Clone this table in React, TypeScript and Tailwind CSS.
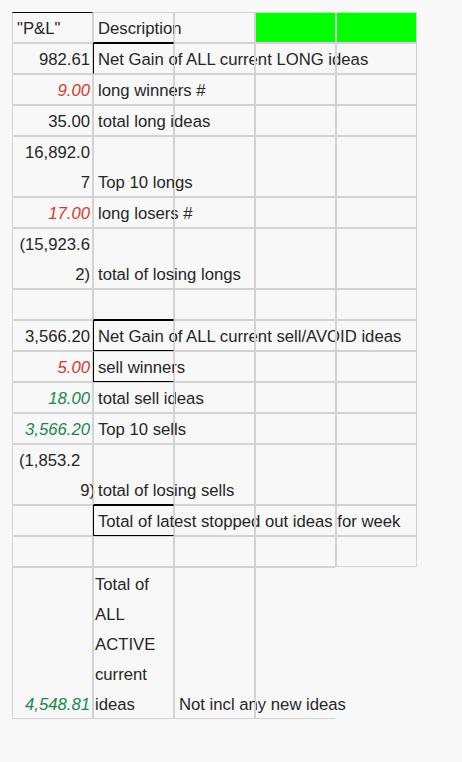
import React from "react";

const G = "border-[#d3d3d3]";

function Cell({
  children,
  className = "",
}: {
  children?: React.ReactNode;
  className?: string;
}) {
  return (
    <div
      className={`flex min-w-0 items-end overflow-visible whitespace-nowrap border ${G} leading-[30px] [&>*]:-mb-[2px] ${className}`}
    >
      {children}
    </div>
  );
}

function Num({ children, tone }: { children: React.ReactNode; tone?: "red" | "green" }) {
  const c =
    tone === "red"
      ? "italic text-[#d53a2f]"
      : tone === "green"
      ? "italic text-[#168a4c]"
      : "";
  return <span className={`block w-full pr-[2px] text-right ${c}`}>{children}</span>;
}

function Txt({ children, className = "" }: { children: React.ReactNode; className?: string }) {
  return <span className={`block pl-[4px] ${className}`}>{children}</span>;
}

export default function App() {
  return (
    <div
      className="h-[762px] w-[462px] bg-[#f8f8f8] pl-[12px] pt-[12px] text-[16.7px] text-[#262626]"
      style={{ fontFamily: '"Liberation Sans", Arial, sans-serif' }}
    >
      <div className="grid grid-cols-[81px_81px_81px_81px_81px] grid-rows-[31px_31px_31px_31px_61px_31px_61px_31px_31px_31px_31px_31px_61px_31px_31px_152px]">
        {/* row 1 */}
        <Cell className="border-t-black">
          <Txt>"P&amp;L"</Txt>
        </Cell>
        <Cell className="border-b-black">
          <Txt>Description</Txt>
        </Cell>
        <Cell />
        <Cell className="border-[#b2dcb2] bg-[#00ff00]" />
        <Cell className="border-[#b2dcb2] bg-[#00ff00]" />

        {/* row 2 */}
        <Cell>
          <Num>982.61</Num>
        </Cell>
        <Cell className="border-l-black border-t-black">
          <Txt>Net Gain of ALL current LONG ideas</Txt>
        </Cell>
        <Cell />
        <Cell />
        <Cell />

        {/* row 3 */}
        <Cell>
          <Num tone="red">9.00</Num>
        </Cell>
        <Cell>
          <Txt>long winners #</Txt>
        </Cell>
        <Cell />
        <Cell />
        <Cell />

        {/* row 4 */}
        <Cell>
          <Num>35.00</Num>
        </Cell>
        <Cell>
          <Txt>total long ideas</Txt>
        </Cell>
        <Cell />
        <Cell />
        <Cell />

        {/* row 5 */}
        <Cell>
          <div className="w-full">
            <Num>16,892.0</Num>
            <Num>7</Num>
          </div>
        </Cell>
        <Cell>
          <Txt>Top 10 longs</Txt>
        </Cell>
        <Cell />
        <Cell />
        <Cell />

        {/* row 6 */}
        <Cell>
          <Num tone="red">17.00</Num>
        </Cell>
        <Cell>
          <Txt>long losers #</Txt>
        </Cell>
        <Cell />
        <Cell />
        <Cell />

        {/* row 7 */}
        <Cell>
          <div className="w-full">
            <Num>(15,923.6</Num>
            <Num>2)</Num>
          </div>
        </Cell>
        <Cell>
          <Txt>total of losing longs</Txt>
        </Cell>
        <Cell />
        <Cell />
        <Cell />

        {/* row 8 */}
        <Cell />
        <Cell className="border-b-black" />
        <Cell />
        <Cell />
        <Cell />

        {/* row 9 */}
        <Cell>
          <Num>3,566.20</Num>
        </Cell>
        <Cell className="border-l-black border-t-black border-b-black">
          <Txt>Net Gain of ALL current sell/AVOID ideas</Txt>
        </Cell>
        <Cell />
        <Cell />
        <Cell />

        {/* row 10 */}
        <Cell>
          <Num tone="red">5.00</Num>
        </Cell>
        <Cell className="border-l-black border-b-black">
          <Txt>sell winners</Txt>
        </Cell>
        <Cell />
        <Cell />
        <Cell />

        {/* row 11 */}
        <Cell>
          <Num tone="green">18.00</Num>
        </Cell>
        <Cell>
          <Txt>total sell ideas</Txt>
        </Cell>
        <Cell />
        <Cell />
        <Cell />

        {/* row 12 */}
        <Cell>
          <Num tone="green">3,566.20</Num>
        </Cell>
        <Cell>
          <Txt>Top 10 sells</Txt>
        </Cell>
        <Cell />
        <Cell />
        <Cell />

        {/* row 13 */}
        <Cell>
          <div className="w-full">
            <span className="block pl-[6px]">(1,853.2</span>
            <span className="-mr-[3px] block text-right">9)</span>
          </div>
        </Cell>
        <Cell className="border-b-black">
          <Txt>total of losing sells</Txt>
        </Cell>
        <Cell />
        <Cell />
        <Cell />

        {/* row 14 */}
        <Cell />
        <Cell className="border-l-black border-t-black border-b-black">
          <Txt>Total of latest stopped out ideas for week</Txt>
        </Cell>
        <Cell />
        <Cell />
        <Cell />

        {/* row 15 */}
        <Cell />
        <Cell />
        <Cell />
        <Cell />
        <Cell />

        {/* row 16 */}
        <Cell>
          <Num tone="green">4,548.81</Num>
        </Cell>
        <Cell>
          <div className="pl-[1px]">
            <span className="block">Total of</span>
            <span className="block">ALL</span>
            <span className="block">ACTIVE</span>
            <span className="block">current</span>
            <span className="block">ideas</span>
          </div>
        </Cell>
        <Cell>
          <Txt>Not incl any new ideas</Txt>
        </Cell>
        <Cell className="border-r-transparent" />
        <div />
      </div>
    </div>
  );
}
